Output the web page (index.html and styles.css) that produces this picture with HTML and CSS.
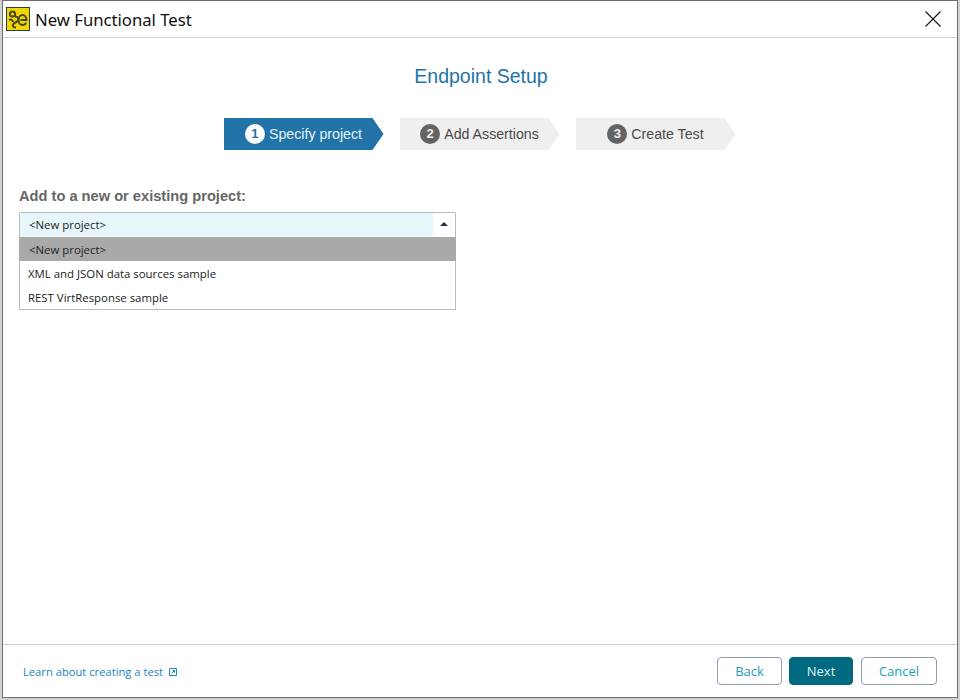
FILE: index.html
```html
<!DOCTYPE html>
<html lang="en">
<head>
  <meta charset="UTF-8">
  <title>New Functional Test</title>
  <link rel="stylesheet" href="styles.css">
</head>
<body>
<div class="window">
  <header class="titlebar">
    <svg class="app-icon" width="24" height="24" viewBox="0 0 24 24">
      <rect x="0.5" y="0.5" width="23" height="23" fill="#f2d600" stroke="#24414f"/>
      <g fill="none" stroke="#47471f" stroke-width="2">
        <circle cx="6.5" cy="7" r="2.6"/>
        <path d="M9 9.5c3 0 4 2 3 4s-4 2-5 4 1 3 3 3"/>
        <path d="M3 13c2-1 4 0 4 2"/>
        <path d="M14.5 13h6c0-3-2-5-4-5s-4 2-4 5 2 5 4 5 3-1 4-2"/>
      </g>
    </svg>
    <div class="title">New Functional Test</div>
    <svg class="close" width="16" height="16" viewBox="0 0 16 16">
      <path d="M0.5 0.5 15.5 15.5M15.5 0.5 0.5 15.5" stroke="#111" stroke-width="1.1" fill="none"/>
    </svg>
  </header>

  <main class="content">
    <h1>Endpoint Setup</h1>
    <div class="steps">
      <div class="step active"><span class="num">1</span>Specify project</div>
      <div class="step"><span class="num">2</span>Add Assertions</div>
      <div class="step"><span class="num">3</span>Create Test</div>
    </div>

    <div class="field-label">Add to a new or existing project:</div>
    <div class="combo">
      <div class="combo-input">
        <div class="combo-value">&lt;New project&gt;</div>
        <div class="combo-btn"><span class="caret"></span></div>
      </div>
      <ul class="combo-list">
        <li class="selected">&lt;New project&gt;</li>
        <li>XML and JSON data sources sample</li>
        <li>REST VirtResponse sample</li>
      </ul>
    </div>
  </main>

  <footer class="footer">
    <a class="learn">Learn about creating a test
      <svg width="8" height="8" viewBox="0 0 8 8">
        <path d="M0.5 0.5h7v7h-7zM2.5 5.5 5.5 2.5M3.5 2.5h2v2" fill="none" stroke="#1a86bd"/>
      </svg>
    </a>
    <div class="buttons">
      <button class="btn back">Back</button>
      <button class="btn next">Next</button>
      <button class="btn cancel">Cancel</button>
    </div>
  </footer>
</div>
</body>
</html>
```
FILE: styles.css
```css
html, body {
  margin: 0;
  padding: 0;
  height: 700px;
  overflow: hidden;
  background: #d2d2d2;
}
.window {
  box-sizing: border-box;
  width: 956px;
  height: 698px;
  margin-left: 2px;
  background: #fff;
  border: 1px solid #6f6f6f;
  display: flex;
  flex-direction: column;
  font-family: "Liberation Sans", sans-serif;
}
.titlebar {
  box-sizing: border-box;
  height: 37px;
  flex: none;
  display: flex;
  align-items: center;
  padding: 0 16px 0 3px;
  border-bottom: 1px solid #cfcfcf;
}
.app-icon { flex: none; margin-top: -1px; }
.title {
  flex: 1;
  margin-left: 5px;
  font-family: "Noto Sans", sans-serif;
  font-size: 16.7px;
  color: #111;
}
.close { flex: none; margin-top: -1px; }
.content {
  flex: 1;
  padding: 0 16px;
}
h1 {
  margin: 26px 0 0 0;
  padding-left: 2px;
  font-size: 19.5px;
  line-height: 24px;
  font-weight: 400;
  text-align: center;
  color: #1f73a8;
}
.steps {
  display: flex;
  gap: 16px;
  justify-content: center;
  margin: 30px 0 0 0;
  padding-right: 1px;
}
.step {
  width: 160px;
  height: 32px;
  box-sizing: border-box;
  display: flex;
  align-items: center;
  justify-content: center;
  font-size: 14.2px;
  color: #4a4a4a;
  background: #efefef;
  clip-path: polygon(0 0, 149px 0, 100% 50%, 149px 100%, 0 100%);
}
.step.active {
  background: #2173a8;
  color: #e8f3fa;
}
.num {
  width: 20px;
  height: 20px;
  border-radius: 50%;
  margin-right: 4px;
  background: #636363;
  color: #eee;
  font-size: 13px;
  font-weight: 700;
  line-height: 19px;
  text-align: center;
}
.active .num {
  background: #fff;
  color: #2173a8;
}
.field-label {
  margin-top: 38px;
  font-size: 14.65px;
  line-height: 16px;
  font-weight: 700;
  color: #666;
}
.combo {
  width: 437px;
  margin-top: 8px;
  font-family: "Open Sans", sans-serif;
  font-size: 11.4px;
  color: #222;
}
.combo-input {
  box-sizing: border-box;
  height: 25px;
  display: flex;
  border: 1px solid #b4bcc9;
  border-bottom: 0;
  border-radius: 2px 2px 0 0;
  background: #fff;
}
.combo-value {
  flex: 1;
  padding-left: 9px;
  line-height: 23px;
  height: 23px;
  background: #e7f6f9;
}
.combo-btn {
  width: 22px;
  display: flex;
  align-items: center;
  justify-content: center;
  padding-bottom: 2px;
}
.caret {
  width: 0;
  height: 0;
  border-left: 4px solid transparent;
  border-right: 4px solid transparent;
  border-bottom: 4px solid #26304a;
}
.combo-list {
  list-style: none;
  margin: 0;
  padding: 0;
  border: 1px solid #b4bcc9;
  border-top: 0;
}
.combo-list li {
  height: 24px;
  line-height: 25px;
  padding-left: 8px;
}
.combo-list li.selected {
  padding-left: 10px;
  margin-left: -1px;
  margin-right: -1px;
  background: #a9a9a9;
}
.footer {
  box-sizing: border-box;
  height: 53px;
  flex: none;
  display: flex;
  align-items: center;
  justify-content: space-between;
  padding: 0 20px 0 20px;
  border-top: 1px solid #cfcfcf;
}
.learn {
  font-family: "Open Sans", sans-serif;
  font-size: 11.2px;
  color: #1a86bd;
  margin-top: 1px;
}
.learn svg { margin-left: 3px; }
.buttons {
  display: flex;
  gap: 7px;
}
.btn {
  height: 28px;
  padding: 0;
  border: 1px solid #8d9cb0;
  border-radius: 4px;
  background: #fff;
  color: #1a9bbd;
  font-family: "Open Sans", sans-serif;
  font-size: 13px;
}
.back { width: 65px; }
.next {
  width: 64px;
  border-color: #006a80;
  background: #006a80;
  color: #e4f2f5;
}
.cancel { width: 76px; margin-left: 1px; }
```
